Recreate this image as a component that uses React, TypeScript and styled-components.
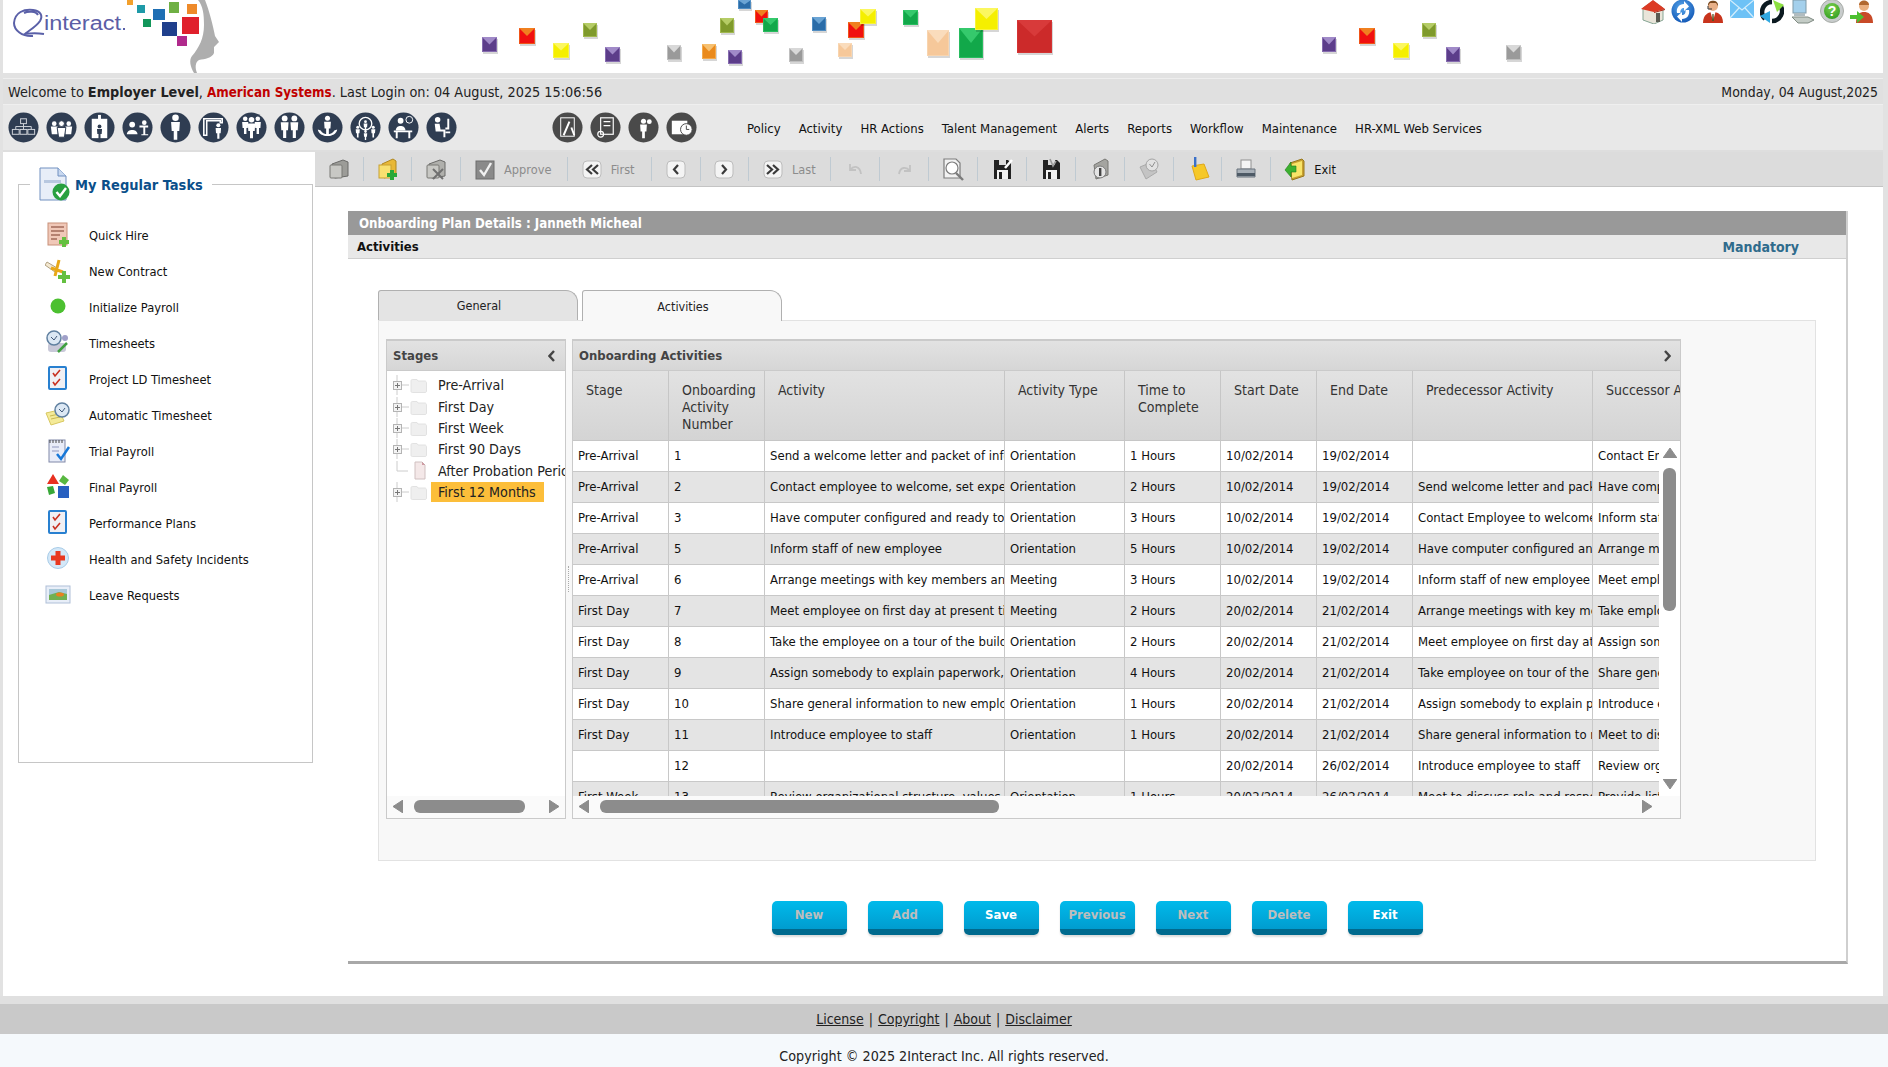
import React from "react";
import styled, { createGlobalStyle } from "styled-components";

const FONT = `"DejaVu Sans Condensed", "DejaVu Sans", sans-serif`;

const GlobalStyle = createGlobalStyle`
  html, body {
    margin: 0;
    padding: 0;
    background: #e2e2e2;
    font-family: ${FONT};
    color: #222;
  }
  * { box-sizing: border-box; }
`;

const Page = styled.div`
  width: 1888px;
  height: 1067px;
  overflow: hidden;
  display: flex;
  flex-direction: column;
  background: #e2e2e2;
`;

const Shell = styled.div`
  margin: 0 5px 0 3px;
  display: flex;
  flex-direction: column;
`;

const Banner = styled.header`
  height: 73px;
  background: #fff;
  display: flex;
  align-items: flex-start;
  margin-bottom: 5px;
  overflow: hidden;
`;

const TopIcons = styled.div`
  margin-left: auto;
  padding-right: 9.5px;
  display: flex;
  gap: 5.8px;
`;

const WelcomeBar = styled.div`
  height: 27px;
  border-top: 1px solid #eee;
  border-bottom: 1px solid #efefef;
  background: #e0e0e0;
  display: flex;
  align-items: center;
  justify-content: space-between;
  padding: 0 5px;
  font-size: 14.3px;
`;

const Firm = styled.b`
  color: #c00000;
  font-size: 13.3px;
`;

const DateText = styled.span`
  font-size: 13.9px;
`;

const IconBar = styled.div`
  height: 45px;
  background: #e8e8e8;
  display: flex;
  align-items: center;
  padding: 0 0 1px 5px;
`;

const CircleGroup = styled.div`
  display: flex;
  gap: 7px;
`;

const ReportGroup = styled(CircleGroup)`
  margin-left: 95px;
`;

const NavMenu = styled.nav`
  margin-left: 50px;
  padding-top: 3px;
  display: flex;
  gap: 18.05px;
  font-size: 13px;
  color: #111;
`;

const Rule = styled.div`
  height: 2px;
  background: #dedede;
`;

const Content = styled.div`
  height: 844px;
  display: flex;
  background: #fff;
`;

const Sidebar = styled.aside`
  width: 312px;
  padding: 15px 0 0 15px;
  flex: none;
`;

const TaskBox = styled.fieldset`
  width: 295px;
  height: 596px;
  margin: 0;
  padding: 0 0 0 26px;
  border: 1px solid #c6c6c6;
`;

const TaskLegend = styled.legend`
  margin-left: -15px;
  padding: 0 9px;
  height: 34px;
  display: flex;
  align-items: center;
  gap: 5px;
  font-size: 14.5px;
  font-weight: bold;
  color: #0b4f8a;
`;

const LegendText = styled.span`
  padding-top: 2px;
`;

const TaskList = styled.div`
  padding-top: 16px;
`;

const TaskRow = styled.div`
  height: 36px;
  display: flex;
  align-items: center;
  gap: 18px;
  font-size: 12.8px;
  color: #111;
`;

const Main = styled.main`
  flex: 1;
  display: flex;
  flex-direction: column;
`;

const Toolbar = styled.div`
  height: 35px;
  background: #dcdcdc;
  border-bottom: 1px solid #c4c4c4;
  display: flex;
  align-items: center;
`;

const Tool = styled.div<{ $w: number; $muted?: boolean; $last?: boolean }>`
  width: ${(p) => p.$w}px;
  height: 24px;
  flex: none;
  display: flex;
  align-items: center;
  justify-content: ${(p) => (p.$w > 49 ? "flex-start" : "center")};
  padding-left: ${(p) => (p.$w > 49 ? 12 : 0)}px;
  gap: 7px;
  font-size: 12.7px;
  color: ${(p) => (p.$muted ? "#8c8c8c" : "#111")};
  border-right: ${(p) => (p.$last ? "none" : "1px solid #bfcad2")};
`;

const Panel = styled.section`
  margin: 24px 35px 0 33px;
  border-right: 2px solid #cfcfcf;
  border-bottom: 3px solid #a8a8a8;
  height: 753px;
`;

const PanelTitle = styled.div`
  height: 24px;
  background: #999;
  color: #fff;
  font-size: 13.2px;
  font-weight: bold;
  display: flex;
  align-items: center;
  padding-left: 11px;
`;

const PanelSub = styled.div`
  height: 24px;
  background: #e8e8e8;
  border-bottom: 1px solid #cfcfcf;
  display: flex;
  align-items: center;
  justify-content: space-between;
  padding: 0 47px 1px 9px;
  font-size: 13px;
  font-weight: bold;
  color: #111;
`;

const Mandatory = styled.span`
  font-size: 14px;
  padding-top: 1px;
  color: #2f6b8c;
`;

const PanelBody = styled.div`
  padding: 31px 30px 0 30px;
`;

const Tabs = styled.div`
  display: flex;
  gap: 4px;
  height: 30px;
`;

const TabItem = styled.div<{ $active?: boolean }>`
  width: 200px;
  height: ${(p) => (p.$active ? 31 : 30)}px;
  padding-left: 2px;
  border: 1px solid #b0b0b0;
  border-bottom: none;
  border-radius: 3px 12px 0 0;
  background: ${(p) => (p.$active ? "#f8f8f8" : "#e4e4e4")};
  position: relative;
  display: flex;
  align-items: center;
  justify-content: center;
  font-size: 12.5px;
  color: #222;
`;

const TabPane = styled.div`
  height: 541px;
  background: #f8f8f8;
  border: 1px solid #e2e2e2;
  padding: 18px 0 0 7px;
  display: flex;
  gap: 6px;
`;

const GridBox = styled.div<{ $w: number }>`
  width: ${(p) => p.$w}px;
  height: 480px;
  flex: none;
  border: 1px solid #cacaca;
  border-top-width: 2px;
  background: #fff;
  display: flex;
  flex-direction: column;
  position: relative;
`;

const Grip = styled.i`
  position: absolute;
  left: -5px;
  top: 225px;
  height: 26px;
  border-left: 1px dotted #aaa;
`;

const BoxHead = styled.div`
  height: 30px;
  flex: none;
  background: linear-gradient(#e2e2e2, #d6d6d6);
  border-bottom: 1px solid #cacaca;
  display: flex;
  align-items: center;
  justify-content: space-between;
  padding: 0 9px 0 6px;
  font-size: 13px;
  font-weight: bold;
  color: #444;
`;

const TreeList = styled.div`
  height: 425px;
  flex: none;
  padding: 3.5px 0 0 5px;
  overflow: hidden;
`;

const TreeNode = styled.div`
  height: 21.4px;
  display: flex;
  align-items: center;
  white-space: nowrap;
  font-size: 14.2px;
  color: #222;
`;

const TreeLabel = styled.span<{ $on?: boolean }>`
  margin-left: 4px;
  padding: 0 8px 0 7px;
  line-height: 20px;
  background: ${(p) => (p.$on ? "#fcbe3a" : "transparent")};
`;

const HBar = styled.div`
  flex: 1;
  background: #fafafa;
  display: flex;
  align-items: center;
  padding-bottom: 2px;
`;

const Thumb = styled.div<{ $w: number; $l: number }>`
  width: ${(p) => p.$w}px;
  height: 13px;
  margin-left: ${(p) => p.$l}px;
  border-radius: 6px;
  background: #8c8c8c;
`;

const ArrowSide = styled.svg<{ $l?: number }>`
  flex: none;
  margin-left: ${(p) => p.$l ?? 0}px;
`;

const GRID = "96px 96px 240px 120px 96px 96px 96px 180px 180px";

const HeadClip = styled.div`
  overflow: hidden;
  flex: none;
`;

const HeadRow = styled.div`
  width: 1180px;
  height: 70px;
  display: grid;
  grid-template-columns: ${GRID};
  background: linear-gradient(#e2e2e2, #d4d4d4);
  border-bottom: 1px solid #c6c6c6;
`;

const HeadCell = styled.div`
  padding: 11px 8px 0 13px;
  font-size: 14px;
  line-height: 17px;
  color: #333;
  border-right: 1px solid #c6c6c6;
  white-space: pre-line;
`;

const BodyWrap = styled.div`
  height: 355px;
  flex: none;
  display: flex;
`;

const BodyClip = styled.div`
  width: 1086px;
  overflow: hidden;
  flex: none;
`;

const DataRow = styled.div<{ $alt: boolean }>`
  width: 1180px;
  height: 31px;
  display: grid;
  grid-template-columns: ${GRID};
  background: ${(p) => (p.$alt ? "#e4e4e4" : "#fff")};
  border-bottom: 1px solid #c8c8c8;
`;

const DataCell = styled.div`
  padding: 0 0 0 5px;
  font-size: 13px;
  line-height: 30px;
  color: #111;
  white-space: nowrap;
  overflow: hidden;
  border-right: 1px solid #c8c8c8;
`;

const VBar = styled.div`
  flex: 1;
  background: #fff;
  display: flex;
  flex-direction: column;
  align-items: center;
  justify-content: space-between;
  padding: 7px 0 7px;
`;

const VThumb = styled.div`
  width: 13px;
  height: 143px;
  margin: 10px 0 auto;
  border-radius: 6px;
  background: #8c8c8c;
`;

const Actions = styled.div`
  margin-top: 40px;
  display: flex;
  justify-content: center;
  gap: 21px;
`;

const ActionButton = styled.div<{ $on?: boolean }>`
  width: 75px;
  height: 34px;
  border-radius: 5px;
  background: linear-gradient(#00baeb, #009ccf);
  border-bottom: 6px solid #006a8e;
  box-shadow: 0 2px 2px rgba(0, 0, 0, 0.14);
  display: flex;
  align-items: center;
  justify-content: center;
  padding-bottom: 1px;
  font-size: 13px;
  font-weight: bold;
  color: ${(p) => (p.$on ? "#fff" : "#bdbdbd")};
`;

const FootLinks = styled.div`
  height: 38px;
  border-top: 8px solid #e0e0e0;
  background: #c9c9c9;
  display: flex;
  justify-content: center;
  align-items: center;
  gap: 5px;
  font-size: 14px;
  color: #222;
`;

const FootLink = styled.a`
  color: #222;
  text-decoration: underline;
`;

const FootCopy = styled.div`
  height: 33px;
  padding-top: 10px;
  background: #f5f9fc;
  display: flex;
  justify-content: center;
  align-items: center;
  font-size: 14.2px;
  color: #222;
`;

/* ---------- drawings ---------- */

function Block({ x, y, w, h, c, lite }: { x: number; y: number; w: number; h: number; c: string; lite: string }) {
  return (
    <g>
      <rect x={x + 1} y={y + 2} width={w} height={h} fill="#000" opacity={0.16} />
      <rect x={x} y={y} width={w} height={h} fill={c} />
      <polygon points={`${x},${y} ${x + w},${y} ${x + w / 2},${y + h / 2}`} fill={lite} />
      <rect x={x + 0.5} y={y + 0.5} width={w - 1} height={h - 1} fill="none" stroke={lite} opacity={0.6} />
    </g>
  );
}

const PURPLE = ["#5c3d8a", "#a08ac8"];
const RED = ["#f01010", "#f08020"];
const YEL = ["#f5ef00", "#fbf760"];
const OLIVE = ["#7f9a2c", "#b5cc66"];
const GRAY = ["#9a9a9a", "#d8d8d8"];
const ORNG = ["#ea8a1c", "#f6c070"];
const GRN = ["#12a84a", "#35c96c"];
const BLUE = ["#2a6ca8", "#6aa4d4"];
const PEACH = ["#f6c89a", "#fadcbc"];

const blocks: [number, number, number, number, string[]][] = [
  [482, 37, 15, 15, PURPLE], [519, 28, 16, 16, RED], [553, 43, 16, 15, YEL], [583, 23, 14, 14, OLIVE],
  [605, 47, 15, 15, PURPLE], [667, 45, 14, 15, GRAY], [702, 44, 14, 15, ORNG], [728, 50, 14, 14, PURPLE],
  [720, 18, 14, 15, OLIVE], [738, 0, 13, 9, BLUE], [755, 10, 13, 13, RED], [763, 18, 15, 14, GRN],
  [789, 48, 14, 14, GRAY], [812, 17, 14, 14, BLUE], [838, 43, 14, 14, PEACH], [848, 22, 16, 16, RED],
  [860, 9, 16, 15, YEL], [903, 10, 15, 15, GRN], [927, 30, 22, 26, PEACH], [959, 28, 24, 30, GRN],
  [975, 8, 23, 22, YEL], [1017, 20, 35, 33, ["#cc2a2a", "#d83a3a"]], [1322, 37, 14, 15, PURPLE],
  [1359, 28, 16, 16, RED], [1393, 43, 16, 15, YEL], [1422, 23, 14, 14, OLIVE], [1446, 47, 14, 15, PURPLE],
  [1506, 45, 15, 15, GRAY],
];

function Logo() {
  const tiles: [number, number, number, number, string][] = [
    [127, 0, 6, 5, "#f3a02c"], [137, 5, 8, 8, "#1e9aa8"], [169, 2, 10, 11, "#6fb044"], [187, 4, 10, 10, "#ee8a2a"],
    [153, 9, 12, 11, "#1e6fb4"], [143, 19, 8, 8, "#12965a"], [162, 22, 15, 14, "#1f3f8c"], [182, 17, 17, 17, "#e0202c"],
    [177, 36, 10, 10, "#b02a8c"],
  ];
  return (
    <svg width="460" height="73" viewBox="0 0 460 73" style={{ flex: "none", marginLeft: -3 }}>
      <path d="M205 0C209 10 213 25 215 36L219 42L214 47L214 53C212 58 205 59 199 60C195 62 195 68 197 73L194 73C190 66 189 60 192 56C199 48 204 38 204 25C204 14 203 6 198 0Z" fill="#aeaeae" />
      <path d="M14 23C15 12 24 9 33 10C41 11 43 16 40 21C36 27 28 31 25 34C31 33 38 33 44 34M14 23C14 30 22 37 33 36M24 13C28 11 36 11 38 15" fill="none" stroke="#5a60a8" strokeWidth="2" />
      <text x="44" y="30" fontFamily="Liberation Sans, sans-serif" fontSize="20" fill="#5b5ea6" textLength="77" lengthAdjust="spacingAndGlyphs">interact</text>
      <rect x="123" y="28" width="2" height="2" fill="#5b5ea6" />
      {tiles.map(([x, y, w, h, c], i) => (
        <rect key={i} x={x} y={y} width={w} height={h} fill={c} />
      ))}
    </svg>
  );
}

function BlockArt() {
  return (
    <svg width="1080" height="73" viewBox="460 0 1080 73" style={{ flex: "none" }}>
      {blocks.map(([x, y, w, h, [c, lite]], i) => (
        <Block key={i} x={x} y={y} w={w} h={h} c={c} lite={lite} />
      ))}
    </svg>
  );
}

const syncArrow = "M6 13C5 8 8 4 13 4V1L18 6.5L13 11V8C10.5 8 9 10 9.5 13Z";

const topDrawings: React.ReactNode[] = [
  <g key="home"><path d="M12 1L22 8V20L13 24L2 20V8Z" fill="#e9e5da" stroke="#86a594" /><path d="M12 0L24 9L13 12L0 9Z" fill="#dc3a24" /><path d="M13 12L24 9V10L13 13Z" fill="#a82414" /><rect x="15" y="13" width="4" height="9" fill="#5a5a52" /></g>,
  <g key="sync">
    <defs><radialGradient id="syncFill" cx="0.45" cy="0.35" r="0.75"><stop offset="0" stopColor="#58a8ec" /><stop offset="1" stopColor="#0b4fb0" /></radialGradient></defs>
    <circle cx="12" cy="11" r="11.5" fill="url(#syncFill)" />
    <path d={syncArrow} fill="#fff" />
    <path d={syncArrow} fill="#fff" transform="rotate(180 12 11.5)" />
  </g>,
  <g key="agent"><circle cx="12" cy="6" r="5" fill="#e8b088" /><path d="M7 6C6 -1 18 -1 17 6L15 3H9Z" fill="#7a4a20" /><path d="M7 6V9H11" fill="none" stroke="#333" /><path d="M2 23C2 14 8 12 12 12C16 12 22 14 22 23Z" fill="#c8341c" /><path d="M9.5 12L12 21L14.5 12Z" fill="#fff" /><path d="M11.4 14H12.6L13 21H11Z" fill="#552" /></g>,
  <g key="mail"><rect x="0" y="0" width="24" height="18" fill="#6ec2f6" /><path d="M0 0L12 10L24 0M0 18L9 8M24 18L15 8" fill="none" stroke="#d4eefc" strokeWidth="1.2" /></g>,
  <g key="refresh"><path d="M12 2A10 10 0 0 0 5 19" fill="none" stroke="#0c1a20" strokeWidth="4.5" /><path d="M12 21A10 10 0 0 0 20 5" fill="none" stroke="#0c1a20" strokeWidth="4.5" /><path d="M13 0L24 5L17 12Z" fill="#8ce040" /><path d="M10 11L0 16L10 23Z" fill="#30a8e0" /></g>,
  <g key="pc"><rect x="3" y="0" width="13" height="13" fill="#a4d0ec" stroke="#7f9aa8" /><rect x="4" y="13" width="11" height="3" fill="#b0bcc0" /><path d="M2 17H18L24 20L18 23H8Z" fill="#c4ccc6" stroke="#7f8a82" /></g>,
  <g key="help">
    <defs><radialGradient id="helpFill" cx="0.45" cy="0.3" r="0.8"><stop offset="0" stopColor="#7cd050" /><stop offset="1" stopColor="#2c9a1c" /></radialGradient></defs>
    <circle cx="12" cy="11" r="11.5" fill="#c8cccc" stroke="#a8aca8" /><circle cx="12" cy="11" r="8" fill="url(#helpFill)" />
    <text x="12" y="16" textAnchor="middle" fontSize="14" fontWeight="bold" fill="#fff" fontFamily="Liberation Sans, sans-serif">?</text>
  </g>,
  <g key="logout"><circle cx="14" cy="6" r="5" fill="#eab080" /><path d="M9 5C9 -1 19 -1 19 5Z" fill="#b06830" /><path d="M6 23C6 14 10 12 14 12C18 12 23 14 23 23Z" fill="#c84a28" /><path d="M0 15H7V11L14 17L7 23V19H0Z" fill="#4cc030" /></g>,
];

const Wht = "#fff";
const Dark = "#2f3d52";
function P({ x, y, s = 1, c = Wht }: { x: number; y: number; s?: number; c?: string }) {
  return (
    <g transform={`translate(${x} ${y}) scale(${s})`} fill={c}>
      <circle cx="0" cy="-5.5" r="2.6" />
      <path d="M-3.5 -2H3.5L3 5H1.4V12H-1.4V5H-3Z" />
    </g>
  );
}

const circleDrawings: React.ReactNode[] = [
  <g key="0" fill="none" stroke="#d0d4da" strokeWidth="1"><rect x="13" y="7" width="6" height="5" /><rect x="4.5" y="18" width="7" height="5" /><rect x="12.5" y="18" width="7" height="5" /><rect x="20.5" y="18" width="7" height="5" /><path d="M16 12V15M8 18V15H24V18M16 15V18" /></g>,
  <g key="1"><circle cx="8.5" cy="12" r="2.4" fill={Wht} /><circle cx="23.5" cy="12" r="2.4" fill={Wht} /><path d="M5 15H12V23H6ZM20 15H27L26 23H20Z" fill={Wht} /><circle cx="16" cy="12" r="3" fill={Wht} stroke={Dark} /><path d="M11.5 16H20.5L19 26H13Z" fill={Wht} stroke={Dark} /></g>,
  <g key="2"><rect x="14.5" y="3" width="3" height="5" fill={Wht} /><rect x="8" y="7" width="16" height="20" fill={Wht} /><P x={16} y={19} s={0.75} c={Dark} /></g>,
  <g key="3"><circle cx="10.5" cy="13" r="3" fill={Wht} /><path d="M5 23C5 17 16 17 16 23Z" fill={Wht} /><circle cx="23" cy="11" r="2.4" fill={Wht} /><path d="M18 14H27V16H24V23H27V24H20V23H22V16H18Z" fill={Wht} /></g>,
  <g key="4"><P x={16} y={13} s={1.3} /></g>,
  <g key="5"><path d="M6 7H25V11H23V9H9V24H6Z" fill="none" stroke={Wht} strokeWidth="1.6" /><P x={21} y={18} s={0.8} /></g>,
  <g key="6"><P x={9.5} y={12} s={0.9} /><P x={22.5} y={12} s={0.9} /><P x={16} y={14} s={1.1} /></g>,
  <g key="7"><P x={11} y={13} s={1.15} /><P x={21} y={13} s={1.15} /></g>,
  <g key="8"><P x={16} y={12} s={1} /><path d="M6 18C7 27 25 27 26 18L23 19C21 24 11 24 9 19Z" fill={Wht} /></g>,
  <g key="9"><circle cx="16" cy="12" r="6.5" fill="none" stroke={Wht} strokeWidth="1.4" /><P x={16} y={13} s={0.55} /><P x={8} y={19} s={0.6} /><P x={24} y={19} s={0.6} /><P x={16} y={23} s={0.5} /></g>,
  <g key="10"><circle cx="13" cy="9" r="3" fill={Wht} /><path d="M8 19C8 13 18 13 18 19Z" fill={Wht} /><circle cx="22" cy="8" r="3.5" fill="none" stroke={Wht} /><path d="M6 19H25V21H23V27H21V21H10V27H8V21H6Z" fill={Wht} /></g>,
  <g key="11"><circle cx="12" cy="8" r="2.8" fill={Wht} /><path d="M9 12H14L15 18H20V26H18V20H10Z" fill={Wht} /><path d="M22 7H24V18H20V16H22ZM20 20H25V22H20Z" fill={Wht} /></g>,
];

const Rp = "#4a4a4a";
const reportDrawings: React.ReactNode[] = [
  <g key="0" fill="none" stroke={Wht} strokeWidth="1"><rect x="9" y="6" width="14" height="19" /><path d="M12 24L18 10M20 16L23 24" strokeWidth="2" /></g>,
  <g key="1" fill="none" stroke={Wht} strokeWidth="1.2"><rect x="11" y="6" width="13" height="17" /><path d="M14 10H21M14 14H21" /><circle cx="11" cy="23" r="3" /></g>,
  <g key="2"><P x={16} y={15} s={1} /><circle cx="22" cy="10" r="2.5" fill={Wht} /></g>,
  <g key="3"><path d="M6 9H22V23H6Z" fill={Wht} /><circle cx="21" cy="18" r="6" fill={Wht} stroke={Rp} /><path d="M21 14V18H24" stroke={Rp} fill="none" /></g>,
];

function RoundIcon({ fill, children }: { fill: string; children: React.ReactNode }) {
  return (
    <svg width="31" height="31" viewBox="0 0 32 32">
      <circle cx="16" cy="16" r="15.5" fill={fill} />
      {children}
    </svg>
  );
}

const taskIcons: React.ReactNode[] = [
  <g key="0"><rect x="3" y="1" width="19" height="22" fill="#f0c8b8" stroke="#c89078" /><path d="M6 5H19M6 9H19M6 13H15M6 17H12" stroke="#7a3a2a" /><path d="M17 15H21V18H24V22H21V25H17V22H14V18H17Z" fill="#64c040" /></g>,
  <g key="1"><path d="M2 4L12 10L10 14L0 7Z" fill="#f4e8d0" stroke="#b0a080" /><path d="M14 2L10 18M6 10L18 14" stroke="#e8a818" strokeWidth="3" /><path d="M17 13H21V17H25V21H21V25H17V21H13V17H17Z" fill="#64c040" /></g>,
  <g key="2"><circle cx="13" cy="12" r="7.5" fill="#4cc030" /></g>,
  <g key="3"><rect x="3" y="13" width="18" height="9" rx="3" fill="#c8c8d8" /><circle cx="9" cy="8" r="7" fill="#dce8f4" stroke="#6080a0" strokeWidth="1.5" /><path d="M6 7L9 10L12 6" fill="none" stroke="#405878" /><circle cx="20" cy="8" r="3" fill="#a0a0c8" /><path d="M13 22L22 13" stroke="#40a040" strokeWidth="2.5" /></g>,
  <g key="4"><rect x="4" y="1" width="17" height="22" rx="1" fill="#f0f0f4" stroke="#2880d0" strokeWidth="2" /><path d="M8 7L10 10L15 4M8 16L10 19L15 13" fill="none" stroke="#c83020" strokeWidth="1.6" /></g>,
  <g key="5"><path d="M1 11L14 8L19 19L6 23Z" fill="#f4ea98" stroke="#d8c860" /><path d="M5 14L14 12M6 17L15 15" stroke="#c8b850" /><circle cx="17" cy="8" r="7" fill="#dce8f4" stroke="#6080a0" strokeWidth="1.5" /><path d="M14 7L17 10L20 6" fill="none" stroke="#405878" /></g>,
  <g key="6"><rect x="4" y="2" width="16" height="22" fill="#e8ecf8" stroke="#8088a8" /><path d="M5 2V5M8 2V5M11 2V5M14 2V5M17 2V5" stroke="#444" /><path d="M7 9H14M7 13H14" stroke="#9098c0" /><path d="M12 16L16 21L24 9" fill="none" stroke="#1878d8" strokeWidth="2.5" /></g>,
  <g key="7"><path d="M8 0L14 10H2Z" fill="#e83020" /><path d="M18 1L24 6L20 11L14 7Z" fill="#58b840" /><path d="M2 13L8 12L10 19L4 21Z" fill="#38a838" /><rect x="13" y="12" width="11" height="12" fill="#2860c0" /></g>,
  <g key="8"><rect x="4" y="1" width="17" height="22" rx="1" fill="#f0f0f4" stroke="#2880d0" strokeWidth="2" /><path d="M8 7L10 10L15 4M8 16L10 19L15 13" fill="none" stroke="#c83020" strokeWidth="1.6" /></g>,
  <g key="9"><circle cx="13" cy="12" r="10.5" fill="#d4e8f8" stroke="#a8cce8" /><path d="M10.5 5H15.5V9.5H20V14.5H15.5V19H10.5V14.5H6V9.5H10.5Z" fill="#e83820" /></g>,
  <g key="10"><rect x="1" y="4" width="24" height="17" fill="#e8eef8" stroke="#b0c0d8" /><rect x="4" y="7" width="18" height="11" fill="#70b050" /><path d="M4 7H22V12L14 10L4 13Z" fill="#a8c8d8" /><ellipse cx="15" cy="12.5" rx="4" ry="2" fill="#e88020" /></g>,
];

const GrayFolder = ({ c = "#9c9c98" }: { c?: string }) => (
  <g><path d="M5 7L16 3L21 5V19L8 21L5 19Z" fill={c} stroke="#6a6a68" /><rect x="3" y="8" width="12" height="13" rx="1" fill="#c8c8c4" stroke="#787874" /></g>
);

const roundKey = (d: string) => (
  <g><rect x="3" y="4" width="18" height="17" rx="4" fill="#f4f4f4" stroke="#bcbcbc" /><path d={d} fill="none" stroke="#3a3a3a" strokeWidth="2.2" /></g>
);

const floppy = (extra?: React.ReactNode) => (
  <g><path d="M4 3H18L21 6V22H4Z" fill="#222" /><rect x="9" y="3" width="7" height="5" fill="#dcdcdc" /><rect x="7" y="13" width="11" height="9" fill="#f4f4f4" /><rect x="9" y="15" width="3" height="7" fill="#222" />{extra}</g>
);

const Icons = {
  openDoc: <GrayFolder />,
  addFolder: <g><path d="M6 7L17 2L20 4V18L8 21Z" fill="#e8b838" stroke="#b08820" /><rect x="3" y="8" width="12" height="13" fill="#f8e070" stroke="#c8a030" /><path d="M14 13H18V16H21V20H18V23H14V20H11V16H14Z" fill="#28a838" /></g>,
  delFolder: <g><GrayFolder c="#b0b0ac" /><path d="M9 12L19 22M19 12L9 22" stroke="#707070" strokeWidth="2" /></g>,
  approve: <g><rect x="3" y="4" width="18" height="18" fill="#8a8a8a" stroke="#6c6c6c" /><path d="M7 13L11 18L18 6" fill="none" stroke="#f2f2f2" strokeWidth="2.4" /></g>,
  first: roundKey("M12 8L7 12.5L12 17M18 8L13 12.5L18 17"),
  prev: roundKey("M14 8L10 12.5L14 17"),
  next: roundKey("M10 8L14 12.5L10 17"),
  last: roundKey("M6 8L11 12.5L6 17M12 8L17 12.5L12 17"),
  undo: <path d="M7 7V13H13M7 13C11 8 17 9 18 17" fill="none" stroke="#c2c2c2" strokeWidth="1.8" />,
  redo: <path d="M18 8V14H12M18 14C14 9 8 10 7 17" fill="none" stroke="#c2c2c2" strokeWidth="1.8" />,
  preview: <g fill="none" stroke="#7c7c7c" strokeWidth="1.2"><path d="M3 2H15L19 6V21H3Z" fill="#f2f2f2" /><circle cx="11" cy="11" r="6" fill="#fff" /><path d="M15 16L22 23" strokeWidth="2.4" /></g>,
  saveAs: floppy(<path d="M15 11L22 3" stroke="#fff" strokeWidth="2.5" />),
  save: floppy(<path d="M11 2L14 9L17 4" fill="none" stroke="#999" strokeWidth="1.6" />),
  info: <g><path d="M6 8L17 2L20 4V18L8 22Z" fill="#a4a4a0" stroke="#787874" /><circle cx="12" cy="15" r="6" fill="#e4e4e4" stroke="#7a7a7a" /><rect x="11" y="11" width="2.4" height="8" fill="#444" /></g>,
  schedule: <g><path d="M3 10L15 5L20 15L9 22Z" fill="#c4c4c4" stroke="#aaa" /><circle cx="15" cy="8" r="6" fill="#e2e2e2" stroke="#a4a4a4" /><path d="M12.5 7L15 10L18 5" fill="none" stroke="#909090" /></g>,
  note: <g><path d="M6 9L18 7L23 20L10 23Z" fill="#f6c828" stroke="#e0a818" /><rect x="8" y="0" width="2.4" height="10" fill="#3a70c8" /></g>,
  print: <g><rect x="7" y="3" width="10" height="9" fill="#f4f4f4" stroke="#909090" /><path d="M3 12H21V20H3Z" fill="#a8b0b8" stroke="#68727c" /><rect x="3" y="16" width="18" height="3" fill="#4e5a66" /></g>,
  exit: <g><path d="M7 6L19 2L21 4V19L9 23Z" fill="#c8a030" stroke="#98781c" /><path d="M9 7L19 4V18L9 21Z" fill="#f8e468" /><path d="M2 13L8 5V9H13V15H8V20Z" fill="#3cb030" stroke="#1e8018" strokeWidth="0.6" /></g>,
};

const tools: { w: number; icon: React.ReactNode; label?: string; muted?: boolean }[] = [
  { w: 48.7, icon: Icons.openDoc },
  { w: 48.7, icon: Icons.addFolder },
  { w: 48.7, icon: Icons.delFolder },
  { w: 106.6, icon: Icons.approve, label: "Approve", muted: true },
  { w: 84, icon: Icons.first, label: "First", muted: true },
  { w: 48.9, icon: Icons.prev },
  { w: 48.4, icon: Icons.next },
  { w: 82.4, icon: Icons.last, label: "Last", muted: true },
  { w: 48.9, icon: Icons.undo },
  { w: 48.9, icon: Icons.redo },
  { w: 48.9, icon: Icons.preview },
  { w: 48.9, icon: Icons.saveAs },
  { w: 48.9, icon: Icons.save },
  { w: 48.9, icon: Icons.info },
  { w: 48.9, icon: Icons.schedule },
  { w: 48.9, icon: Icons.note },
  { w: 48.9, icon: Icons.print },
];

function Triangle({ dir, mx }: { dir: "l" | "r" | "u" | "d"; mx?: number }) {
  const pts = { l: "10,0 10,13 0,6.5", r: "0,0 0,13 10,6.5", u: "0,10 14,10 7,0", d: "0,0 14,0 7,10" }[dir];
  const horiz = dir === "l" || dir === "r";
  return (
    <ArrowSide $l={mx} width={horiz ? 10 : 14} height={horiz ? 13 : 10}>
      <polygon points={pts} fill="#8c8c8c" stroke="#8c8c8c" strokeLinejoin="round" />
    </ArrowSide>
  );
}

function Chevron({ right }: { right?: boolean }) {
  return (
    <svg width="8" height="12" viewBox="0 0 8 12">
      <path d={right ? "M2 1L6.5 6L2 11" : "M6 1L1.5 6L6 11"} fill="none" stroke="#444" strokeWidth="2.4" />
    </svg>
  );
}

function TreeGlyphs({ leaf }: { leaf?: boolean }) {
  return (
    <svg width="35" height="20" viewBox="0 0 35 20" style={{ flex: "none" }}>
      {leaf ? (
        <g>
          <path d="M5 0V10H16" stroke="#ccc" fill="none" />
          <path d="M23 1H30L33 4V18H23Z" fill="#f4e8e8" stroke="#d0c0c0" />
          <path d="M30 1V4H33Z" fill="#b05060" opacity={0.5} />
        </g>
      ) : (
        <g>
          <path d="M5 0V20M9 10H17" stroke="#ccc" fill="none" />
          <rect x="1.5" y="6.5" width="8" height="8" fill="#f4f4f4" stroke="#b4b4b4" />
          <path d="M3 10.5H8M5.5 8V13" stroke="#777" />
          <path d="M19 6C19 4.5 20 4.5 21 4.5H25L26 6H33C34 6 34.5 7 34.5 8V16C34.5 17 34 17.5 33 17.5H20.5C19.5 17.5 19 17 19 16Z" fill="#efefef" stroke="#e2e2e2" />
        </g>
      )}
    </svg>
  );
}

/* ---------- data ---------- */

const tasks = [
  "Quick Hire", "New Contract", "Initialize Payroll", "Timesheets", "Project LD Timesheet", "Automatic Timesheet",
  "Trial Payroll", "Final Payroll", "Performance Plans", "Health and Safety Incidents", "Leave Requests",
];

const menu = ["Policy", "Activity", "HR Actions", "Talent Management", "Alerts", "Reports", "Workflow", "Maintenance", "HR-XML Web Services"];

const heads = ["Stage", "Onboarding\nActivity\nNumber", "Activity", "Activity Type", "Time to\nComplete", "Start Date", "End Date", "Predecessor Activity", "Successor Activity"];

const D1 = ["10/02/2014", "19/02/2014"];
const D2 = ["20/02/2014", "21/02/2014"];
const D3 = ["20/02/2014", "26/02/2014"];

const rows: string[][] = [
  ["Pre-Arrival", "1", "Send a welcome letter and packet of information", "Orientation", "1 Hours", ...D1, "", "Contact Employee"],
  ["Pre-Arrival", "2", "Contact employee to welcome, set expectations", "Orientation", "2 Hours", ...D1, "Send welcome letter and packet", "Have computer configured"],
  ["Pre-Arrival", "3", "Have computer configured and ready to use", "Orientation", "3 Hours", ...D1, "Contact Employee to welcome", "Inform staff"],
  ["Pre-Arrival", "5", "Inform staff of new employee", "Orientation", "5 Hours", ...D1, "Have computer configured and ready", "Arrange meetings"],
  ["Pre-Arrival", "6", "Arrange meetings with key members and staff", "Meeting", "3 Hours", ...D1, "Inform staff of new employee", "Meet employee"],
  ["First Day", "7", "Meet employee on first day at present time", "Meeting", "2 Hours", ...D2, "Arrange meetings with key members", "Take employee"],
  ["First Day", "8", "Take the employee on a tour of the building", "Orientation", "2 Hours", ...D2, "Meet employee on first day at present", "Assign somebody"],
  ["First Day", "9", "Assign somebody to explain paperwork, policies", "Orientation", "4 Hours", ...D2, "Take employee on tour of the building", "Share general"],
  ["First Day", "10", "Share general information to new employee", "Orientation", "1 Hours", ...D2, "Assign somebody to explain paperwork", "Introduce employee"],
  ["First Day", "11", "Introduce employee to staff", "Orientation", "1 Hours", ...D2, "Share general information to new", "Meet to discuss"],
  ["", "12", "", "", "", ...D3, "Introduce employee to staff", "Review organizational"],
  ["First Week", "13", "Review organizational structure, values and", "Orientation", "1 Hours", ...D3, "Meet to discuss role and responsibilities", "Provide list"],
];

const stages = ["Pre-Arrival", "First Day", "First Week", "First 90 Days", "After Probation Period", "First 12 Months"];

const actions: [string, boolean][] = [
  ["New", false], ["Add", false], ["Save", true], ["Previous", false], ["Next", false], ["Delete", false], ["Exit", true],
];

function App() {
  return (
    <Page>
      <GlobalStyle />
      <Shell>
        <Banner>
          <Logo />
          <BlockArt />
          <TopIcons>
            {topDrawings.map((d, i) => (
              <svg key={i} width="24" height="24" viewBox="0 0 24 24">{d}</svg>
            ))}
          </TopIcons>
        </Banner>
        <WelcomeBar>
          <span>
            Welcome to <b>Employer Level</b>, <Firm>American Systems</Firm>. Last Login on: 04 August, 2025 15:06:56
          </span>
          <DateText>Monday, 04 August,2025</DateText>
        </WelcomeBar>
        <IconBar>
          <CircleGroup>
            {circleDrawings.map((d, i) => (
              <RoundIcon key={i} fill={Dark}>{d}</RoundIcon>
            ))}
          </CircleGroup>
          <ReportGroup>
            {reportDrawings.map((d, i) => (
              <RoundIcon key={i} fill={Rp}>{d}</RoundIcon>
            ))}
          </ReportGroup>
          <NavMenu>
            {menu.map((m) => (
              <span key={m}>{m}</span>
            ))}
          </NavMenu>
        </IconBar>
        <Rule />
        <Content>
          <Sidebar>
            <TaskBox>
              <TaskLegend>
                <svg width="31" height="34" viewBox="0 0 31 34">
                  <path d="M1 1H19L27 9V33H1Z" fill="#e8eef8" stroke="#7090c0" />
                  <path d="M19 1V9H27" fill="#c8d8f0" stroke="#7090c0" />
                  <rect x="5" y="13" width="17" height="3" fill="#b8c8e0" />
                  <circle cx="22" cy="25" r="8.5" fill="#28a040" />
                  <path d="M17.5 25L21 29L27 21" fill="none" stroke="#fff" strokeWidth="2.4" />
                </svg>
                <LegendText>My Regular Tasks</LegendText>
              </TaskLegend>
              <TaskList>
                {tasks.map((t, i) => (
                  <TaskRow key={t}>
                    <svg width="26" height="26" viewBox="0 0 26 26" style={{ flex: "none" }}>{taskIcons[i]}</svg>
                    {t}
                  </TaskRow>
                ))}
              </TaskList>
            </TaskBox>
          </Sidebar>
          <Main>
            <Toolbar>
              {tools.map((t, i) => (
                <Tool key={i} $w={t.w} $muted={t.muted}>
                  <svg width="24" height="24" viewBox="0 0 24 24" style={{ flex: "none" }}>{t.icon}</svg>
                  {t.label}
                </Tool>
              ))}
              <Tool $w={80} $last>
                <svg width="24" height="24" viewBox="0 0 24 24" style={{ flex: "none" }}>{Icons.exit}</svg>
                Exit
              </Tool>
            </Toolbar>
            <Panel>
              <PanelTitle>Onboarding Plan Details : Janneth Micheal</PanelTitle>
              <PanelSub>
                Activities
                <Mandatory>Mandatory</Mandatory>
              </PanelSub>
              <PanelBody>
                <Tabs>
                  <TabItem>General</TabItem>
                  <TabItem $active>Activities</TabItem>
                </Tabs>
                <TabPane>
                  <GridBox $w={180}>
                    <BoxHead>
                      Stages
                      <Chevron />
                    </BoxHead>
                    <TreeList>
                      {stages.map((s, i) => (
                        <TreeNode key={s}>
                          <TreeGlyphs leaf={i === 4} />
                          <TreeLabel $on={i === 5}>{s}</TreeLabel>
                        </TreeNode>
                      ))}
                    </TreeList>
                    <HBar>
                      <Triangle dir="l" mx={6} />
                      <Thumb $w={111} $l={11} />
                      <Triangle dir="r" mx={24} />
                    </HBar>
                  </GridBox>
                  <GridBox $w={1109}>
                    <Grip />
                    <BoxHead>
                      Onboarding Activities
                      <Chevron right />
                    </BoxHead>
                    <HeadClip>
                      <HeadRow>
                        {heads.map((h) => (
                          <HeadCell key={h}>{h}</HeadCell>
                        ))}
                      </HeadRow>
                    </HeadClip>
                    <BodyWrap>
                      <BodyClip>
                        {rows.map((r, i) => (
                          <DataRow key={i} $alt={i % 2 === 1}>
                            {r.map((c, j) => (
                              <DataCell key={j}>{c}</DataCell>
                            ))}
                          </DataRow>
                        ))}
                      </BodyClip>
                      <VBar>
                        <Triangle dir="u" />
                        <VThumb />
                        <Triangle dir="d" />
                      </VBar>
                    </BodyWrap>
                    <HBar>
                      <Triangle dir="l" mx={6} />
                      <Thumb $w={399} $l={11} />
                      <Triangle dir="r" mx={643} />
                    </HBar>
                  </GridBox>
                </TabPane>
                <Actions>
                  {actions.map(([a, on]) => (
                    <ActionButton key={a} $on={on}>{a}</ActionButton>
                  ))}
                </Actions>
              </PanelBody>
            </Panel>
          </Main>
        </Content>
      </Shell>
      <FootLinks>
        <FootLink>License</FootLink>|<FootLink>Copyright</FootLink>|<FootLink>About</FootLink>|<FootLink>Disclaimer</FootLink>
      </FootLinks>
      <FootCopy>Copyright © 2025 2Interact Inc. All rights reserved.</FootCopy>
    </Page>
  );
}

export default App;
